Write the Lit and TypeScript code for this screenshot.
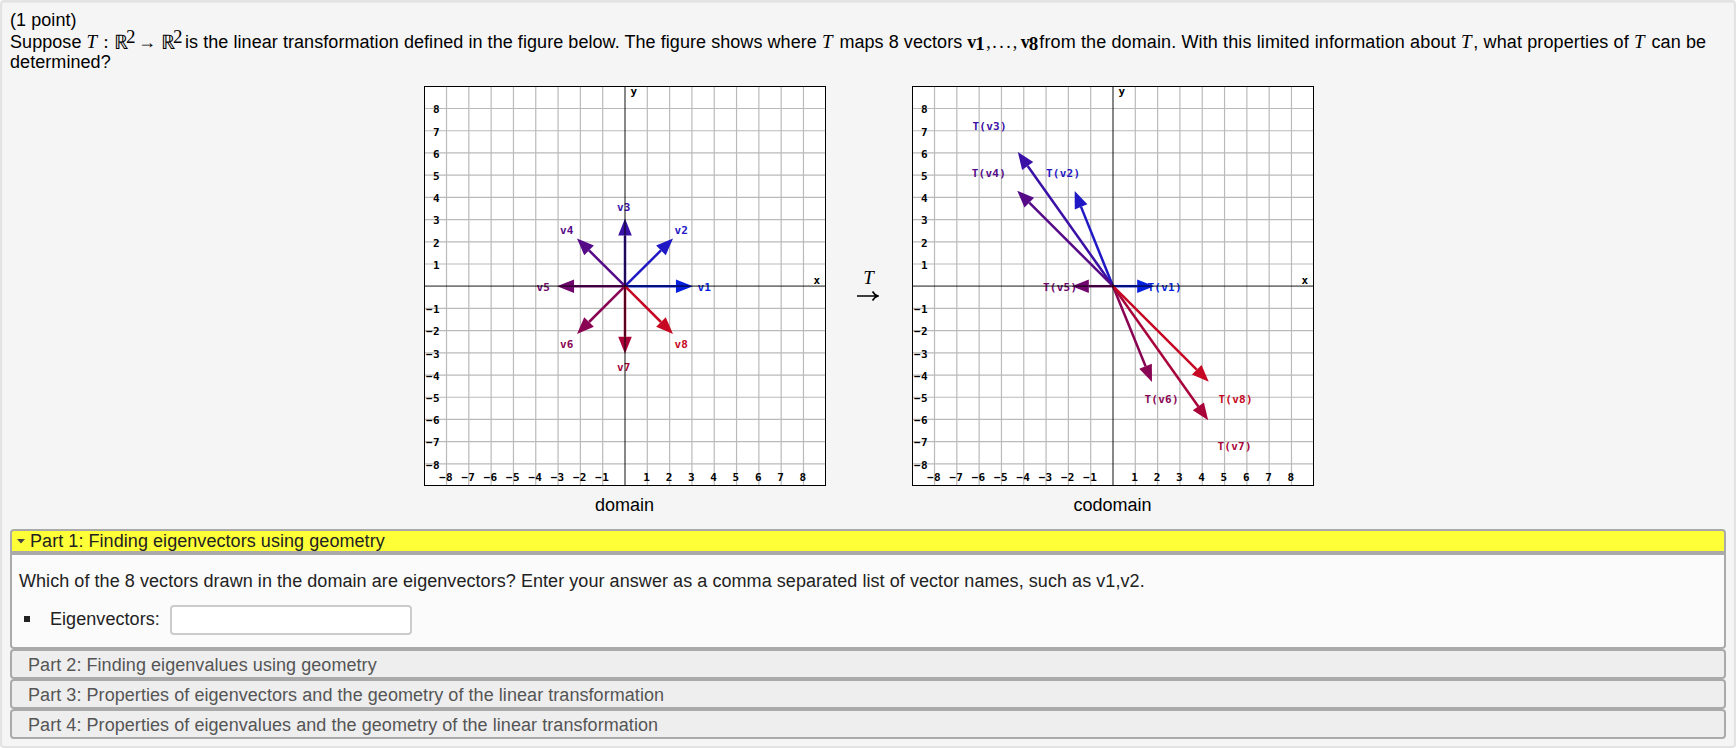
import { LitElement, html, svg, css } from 'lit';
import { customElement, property } from 'lit/decorators.js';

interface PlotVector {
  name: string;
  x: number;
  y: number;
  color: string;
  labelX: number;
  labelY: number;
}

const COLORS = ['#041fdd', '#1f18c4', '#3a10a6', '#560a88', '#70066e', '#8a0454', '#a8043a', '#c60822'];

const vec = (i: number, prefix: boolean, x: number, y: number, labelX: number, labelY: number): PlotVector => ({
  name: prefix ? `T(v${i})` : `v${i}`,
  x, y, color: COLORS[i - 1], labelX, labelY,
});

const DOMAIN: PlotVector[] = [
  vec(1, false, 3, 0, 273.5, 204.5),
  vec(2, false, 2.12, 2.12, 250.5, 147.5),
  vec(3, false, 0, 3, 193, 124.5),
  vec(4, false, -2.12, 2.12, 136, 147.5),
  vec(5, false, -3, 0, 112.5, 204.5),
  vec(6, false, -2.12, -2.12, 136, 261.8),
  vec(7, false, 0, -3, 193, 284.8),
  vec(8, false, 2.12, -2.12, 250.5, 261.8),
];

const CODOMAIN: PlotVector[] = [
  vec(1, true, 1.8, 0, 235.5, 204.5),
  vec(2, true, -1.7, 4.24, 134, 91.3),
  vec(3, true, -4.24, 6, 60.5, 44.3),
  vec(4, true, -4.26, 4.27, 59.7, 91.3),
  vec(5, true, -1.8, 0, 131, 204.5),
  vec(6, true, 1.73, -4.27, 232.4, 316.8),
  vec(7, true, 4.24, -6, 305.5, 364),
  vec(8, true, 4.26, -4.27, 306.5, 316.8),
];

@customElement('vector-plot')
export class VectorPlot extends LitElement {
  static styles = css`
    :host { display: block; }
    svg { display: block; overflow: visible; }
    text {
      font: bold 11px "DejaVu Sans Mono", monospace;
      letter-spacing: 0.25px;
      fill: #000;
    }
    .frame { fill: #fff; stroke: #000; stroke-width: 1; }
    .grid { stroke: #bababa; stroke-width: 1.2; }
    .axis { stroke: #000; stroke-opacity: 0.52; stroke-width: 1.8; }
    .vector { stroke-width: 2.5; }
    .middle { text-anchor: middle; }
    .end { text-anchor: end; }
  `;

  @property({ attribute: false }) vectors: PlotVector[] = [];

  private readonly cx = 201;
  private readonly cy = 200.2;
  private readonly stepX = 22.31;
  private readonly stepY = 22.21;

  render() {
    const ticks = [-8, -7, -6, -5, -4, -3, -2, -1, 1, 2, 3, 4, 5, 6, 7, 8];
    return html`
      <svg width="402" height="400" viewBox="0 0 402 400">
        <rect class="frame" x="0.5" y="0.5" width="401" height="399"></rect>
        ${ticks.map(t => this._grid(t))}
        ${this.vectors.map(v => this._arrow(v))}
        ${this.vectors.map(v => svg`
          <text x=${v.labelX} y=${v.labelY} style="fill:${v.color}">${v.name}</text>
        `)}
        <line class="axis" x1="1" x2="401" y1=${this.cy} y2=${this.cy}></line>
        <line class="axis" x1=${this.cx} x2=${this.cx} y1="1" y2="399"></line>
        ${ticks.map(t => this._tickLabels(t))}
        <text x="389.5" y="197.8">x</text>
        <text x="206.5" y="9">y</text>
      </svg>
    `;
  }

  private _grid(t: number) {
    const x = this.cx + t * this.stepX;
    const y = this.cy - t * this.stepY;
    return svg`
      <line class="grid" x1=${x} x2=${x} y1="1" y2="399"></line>
      <line class="grid" x1="1" x2="401" y1=${y} y2=${y}></line>
    `;
  }

  private _tickLabels(t: number) {
    const label = String(t).replace('-', '−');
    return svg`
      <text class="middle" x=${this.cx + t * this.stepX - 0.5} y="394.6">${label}</text>
      <text class="end" x="15.8" y=${this.cy - t * this.stepY + 4.8}>${label}</text>
    `;
  }

  private _arrow(v: PlotVector) {
    const dx = v.x * this.stepX;
    const dy = -v.y * this.stepY;
    const len = Math.hypot(dx, dy);
    const ux = dx / len;
    const uy = dy / len;
    const x = this.cx + dx + ux;
    const y = this.cy + dy + uy;
    const bx = x - ux * 17;
    const by = y - uy * 17;
    const head = `${x},${y} ${bx - uy * 6.8},${by + ux * 6.8} ${bx + uy * 6.8},${by - ux * 6.8}`;
    return svg`
      <line class="vector" x1=${this.cx} y1=${this.cy} x2=${bx} y2=${by} stroke=${v.color}></line>
      <polygon points=${head} fill=${v.color}></polygon>
    `;
  }
}

@customElement('app-root')
export class AppRoot extends LitElement {
  static styles = css`
    :host {
      display: block;
      box-sizing: border-box;
      height: 748px;
      padding: 8px;
      border: 2px solid #e3e3e3;
      border-radius: 4px;
      background: #f5f5f5;
      box-shadow: inset 0 1px 1px rgba(0, 0, 0, 0.05);
      color: #000;
      font: 18px/20px "Liberation Sans", Arial, sans-serif;
      letter-spacing: 0.06px;
      overflow: hidden;
    }
    .intro { height: 76px; white-space: nowrap; }
    .points, .rest { height: 20px; }
    .line { display: flex; height: 22px; line-height: 24px; }
    .seg { flex: none; }
    .wide { letter-spacing: 0.12px; }
    .math {
      display: grid;
      flex: none;
      font-family: "Liberation Serif", serif;
      white-space: nowrap;
      letter-spacing: 0;
    }
    .mapping { grid-template-columns: 17px 10.5px 12px 12px 23px 12px 12px; }
    .vectors { grid-template-columns: 19px 6px 20.5px 8px 18.5px; }
    .vectors b span { position: relative; top: 2px; left: -1px; font-size: 19px; }
    .dots { letter-spacing: 2.5px; }
    .reals { font-size: 20px; }
    .t { font: italic 19px/24px "Liberation Serif", serif; }
    .line .math.t { width: 12.4px; }
    .sup { position: relative; top: -5px; font-size: 19px; }
    .figures {
      display: flex;
      justify-content: center;
      height: 443px;
      padding-left: 2px;
    }
    figure { margin: 0; width: 402px; text-align: center; }
    figcaption { margin: 9px 1px 0 0; line-height: 20px; letter-spacing: 0; }
    .map {
      width: 86px;
      padding-top: 180px;
      text-align: center;
    }
    .map svg { display: block; margin: 0 auto 0 31px; }
    .map .t { margin-right: 1px; }
    .part {
      border: 2px solid #aaa;
      border-radius: 4px;
      background: #eee;
      color: #555;
      height: 26px;
      line-height: 28px;
      padding-left: 16px;
    }
    .part.open {
      display: flex;
      align-items: center;
      gap: 5px;
      height: 20px;
      line-height: 20px;
      padding-left: 5px;
      background: #ffff38;
      color: #222;
      border-radius: 4px 4px 0 0;
    }
    .body {
      border: 2px solid #aaa;
      border-radius: 0 0 4px 4px;
      background: #fbfbfb;
      color: #222;
      height: 92px;
    }
    .question { padding: 16px 0 0 7px; }
    .answer { display: flex; align-items: center; margin-top: 14px; padding-left: 12px; height: 30px; }
    .bullet { width: 6px; height: 6px; background: #222; margin: 0 20px 3px 0; }
    label { padding-bottom: 2px; }
    input {
      box-sizing: border-box;
      width: 242px;
      height: 30px;
      margin: 0 0 0 10px;
      border: 2px solid #ccc;
      border-radius: 4px;
      background: #fff;
    }
  `;

  render() {
    return html`
      <div class="intro">
        <div class="points">(1 point)</div>
        <div class="line">
          <span class="seg">Suppose&nbsp;</span>
          <span class="math mapping">
            <span class="t">T</span><span>:</span><span class="reals">ℝ</span><span class="sup">2</span>
            <span>→</span><span class="reals">ℝ</span><span class="sup">2</span>
          </span>
          <span class="seg">is the linear transformation defined in the figure below. The figure shows where&nbsp;</span>
          <span class="math t">T</span>
          <span class="seg">&nbsp;maps 8 vectors&nbsp;</span>
          <span class="math vectors">
            <b>v<span>1</span></b><span>,</span><span class="dots">...</span><span>,</span><b>v<span>8</span></b>
          </span>
          <span class="seg wide">from the domain. With this limited information about&nbsp;</span>
          <span class="math t">T</span><span class="seg wide">, what properties of&nbsp;</span>
          <span class="math t">T</span><span class="seg wide">&nbsp;can be</span>
        </div>
        <div class="rest">determined?</div>
      </div>
      <div class="figures">
        <figure>
          <vector-plot .vectors=${DOMAIN}></vector-plot>
          <figcaption>domain</figcaption>
        </figure>
        <div class="map">
          <span class="t">T</span>
          <svg width="22" height="12" viewBox="0 0 22 12" fill="none" stroke="#000" stroke-width="1.6">
            <path d="M0 6H21M15.5 1.5Q17.5 5 21 6Q17.5 7 15.5 10.5"></path>
          </svg>
        </div>
        <figure>
          <vector-plot .vectors=${CODOMAIN}></vector-plot>
          <figcaption>codomain</figcaption>
        </figure>
      </div>
      <div class="part open">
        <svg width="8" height="5" viewBox="0 0 8 5"><path d="M0 0H8L4 4.5Z" fill="#444"></path></svg>
        <span>Part 1: Finding eigenvectors using geometry</span>
      </div>
      <div class="body">
        <div class="question">Which of the 8 vectors drawn in the domain are eigenvectors? Enter your answer as a comma separated list of vector names, such as v1,v2.</div>
        <div class="answer">
          <span class="bullet"></span>
          <label for="eigenvectors">Eigenvectors:</label>
          <input id="eigenvectors" type="text">
        </div>
      </div>
      <div class="part">Part 2: Finding eigenvalues using geometry</div>
      <div class="part">Part 3: Properties of eigenvectors and the geometry of the linear transformation</div>
      <div class="part">Part 4: Properties of eigenvalues and the geometry of the linear transformation</div>
    `;
  }
}
